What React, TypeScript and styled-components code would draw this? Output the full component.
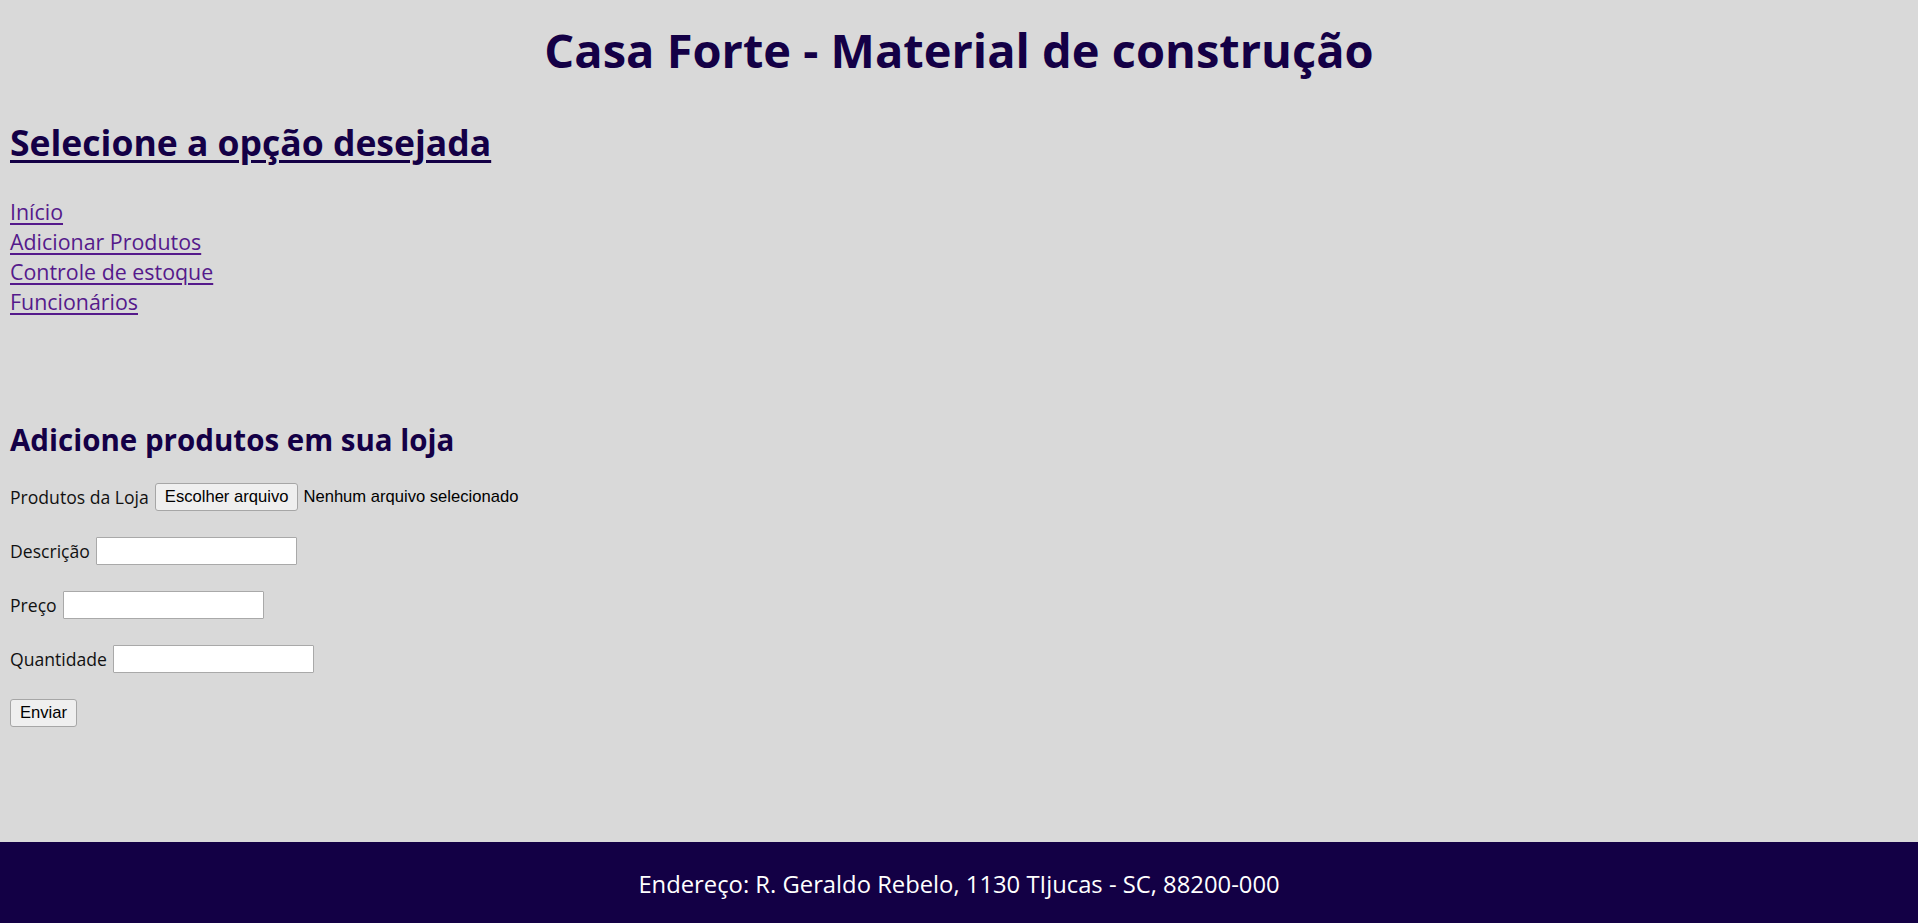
import React from "react";
import styled, { createGlobalStyle } from "styled-components";

const Global = createGlobalStyle`
  html, body { margin: 0; padding: 0; }
  body {
    background: #d9d9d9;
    font-family: "Open Sans", "Noto Sans", sans-serif;
    color: #000;
  }
`;

const Page = styled.div`
  min-height: 100vh;
  display: flex;
  flex-direction: column;
`;

const Main = styled.main`
  flex: 1;
  padding: 0 10px;
`;

const Title = styled.h1`
  margin: 22px 0 0;
  font-size: 47px;
  line-height: 56px;
  font-weight: 700;
  text-align: center;
  color: #140046;
`;

const Subtitle = styled.h2`
  margin: 42px 0 0;
  font-size: 35.5px;
  line-height: 44px;
  font-weight: 700;
  color: #140046;
  text-decoration: underline;
  text-underline-offset: 4px;
  text-decoration-thickness: 3px;
`;

const Nav = styled.nav`
  margin-top: 33px;
  display: flex;
  flex-direction: column;
  align-items: flex-start;
`;

const NavLink = styled.a`
  font-size: 21.4px;
  line-height: 30px;
  color: #551a8b;
  text-decoration: underline;
  text-underline-offset: 3px;
`;

const SectionTitle = styled.h3`
  margin: 105px 0 0;
  font-size: 29.5px;
  line-height: 36px;
  font-weight: 700;
  color: #140046;
`;

const Form = styled.form`
  margin-top: 25px;
  display: flex;
  flex-direction: column;
  align-items: flex-start;
  gap: 26px;
`;

const Row = styled.div`
  display: flex;
  align-items: center;
  gap: 6px;
  height: 28px;
`;

const Label = styled.label`
  font-size: 17.6px;
  line-height: 28px;
  color: #111;
`;

const NativeButton = styled.button`
  font-family: "Liberation Sans", Arial, sans-serif;
  font-size: 16.6px;
  height: 28px;
  padding: 0 9px;
  background: #efefef;
  color: #000;
  border: 1px solid #a6a6a6;
  border-radius: 3px;
  cursor: pointer;
`;

const FileStatus = styled.span`
  font-family: "Liberation Sans", Arial, sans-serif;
  font-size: 16.6px;
  color: #000;
`;

const FileGroup = styled.div`
  display: flex;
  align-items: center;
  gap: 5px;
`;

const TextInput = styled.input`
  box-sizing: border-box;
  width: 201px;
  height: 28px;
  background: #fff;
  border: 1px solid #a9a9a9;
  border-radius: 1px;
  padding: 1px 3px;
  font-family: "Liberation Sans", Arial, sans-serif;
  font-size: 16.6px;
  outline: none;
`;

const Footer = styled.footer`
  height: 81px;
  background: #130045;
  color: #fff;
  display: flex;
  align-items: center;
  justify-content: center;
  font-size: 23.8px;
  padding-top: 3px;
  box-sizing: border-box;
`;

export default function App() {
  const links = ["Início", "Adicionar Produtos", "Controle de estoque", "Funcionários"];
  return (
    <Page>
      <Global />
      <Main>
        <Title>Casa Forte - Material de construção</Title>
        <Subtitle>Selecione a opção desejada</Subtitle>
        <Nav>
          {links.map((l) => (
            <NavLink key={l} href="#">
              {l}
            </NavLink>
          ))}
        </Nav>
        <SectionTitle>Adicione produtos em sua loja</SectionTitle>
        <Form onSubmit={(e) => e.preventDefault()}>
          <Row>
            <Label>Produtos da Loja</Label>
            <FileGroup>
              <NativeButton type="button">Escolher arquivo</NativeButton>
              <FileStatus>Nenhum arquivo selecionado</FileStatus>
            </FileGroup>
          </Row>
          <Row>
            <Label htmlFor="desc">Descrição</Label>
            <TextInput id="desc" type="text" />
          </Row>
          <Row>
            <Label htmlFor="preco">Preço</Label>
            <TextInput id="preco" type="text" />
          </Row>
          <Row>
            <Label htmlFor="qtd">Quantidade</Label>
            <TextInput id="qtd" type="text" />
          </Row>
          <Row>
            <NativeButton type="submit">Enviar</NativeButton>
          </Row>
        </Form>
      </Main>
      <Footer>Endereço: R. Geraldo Rebelo, 1130 TIjucas - SC, 88200-000</Footer>
    </Page>
  );
}
